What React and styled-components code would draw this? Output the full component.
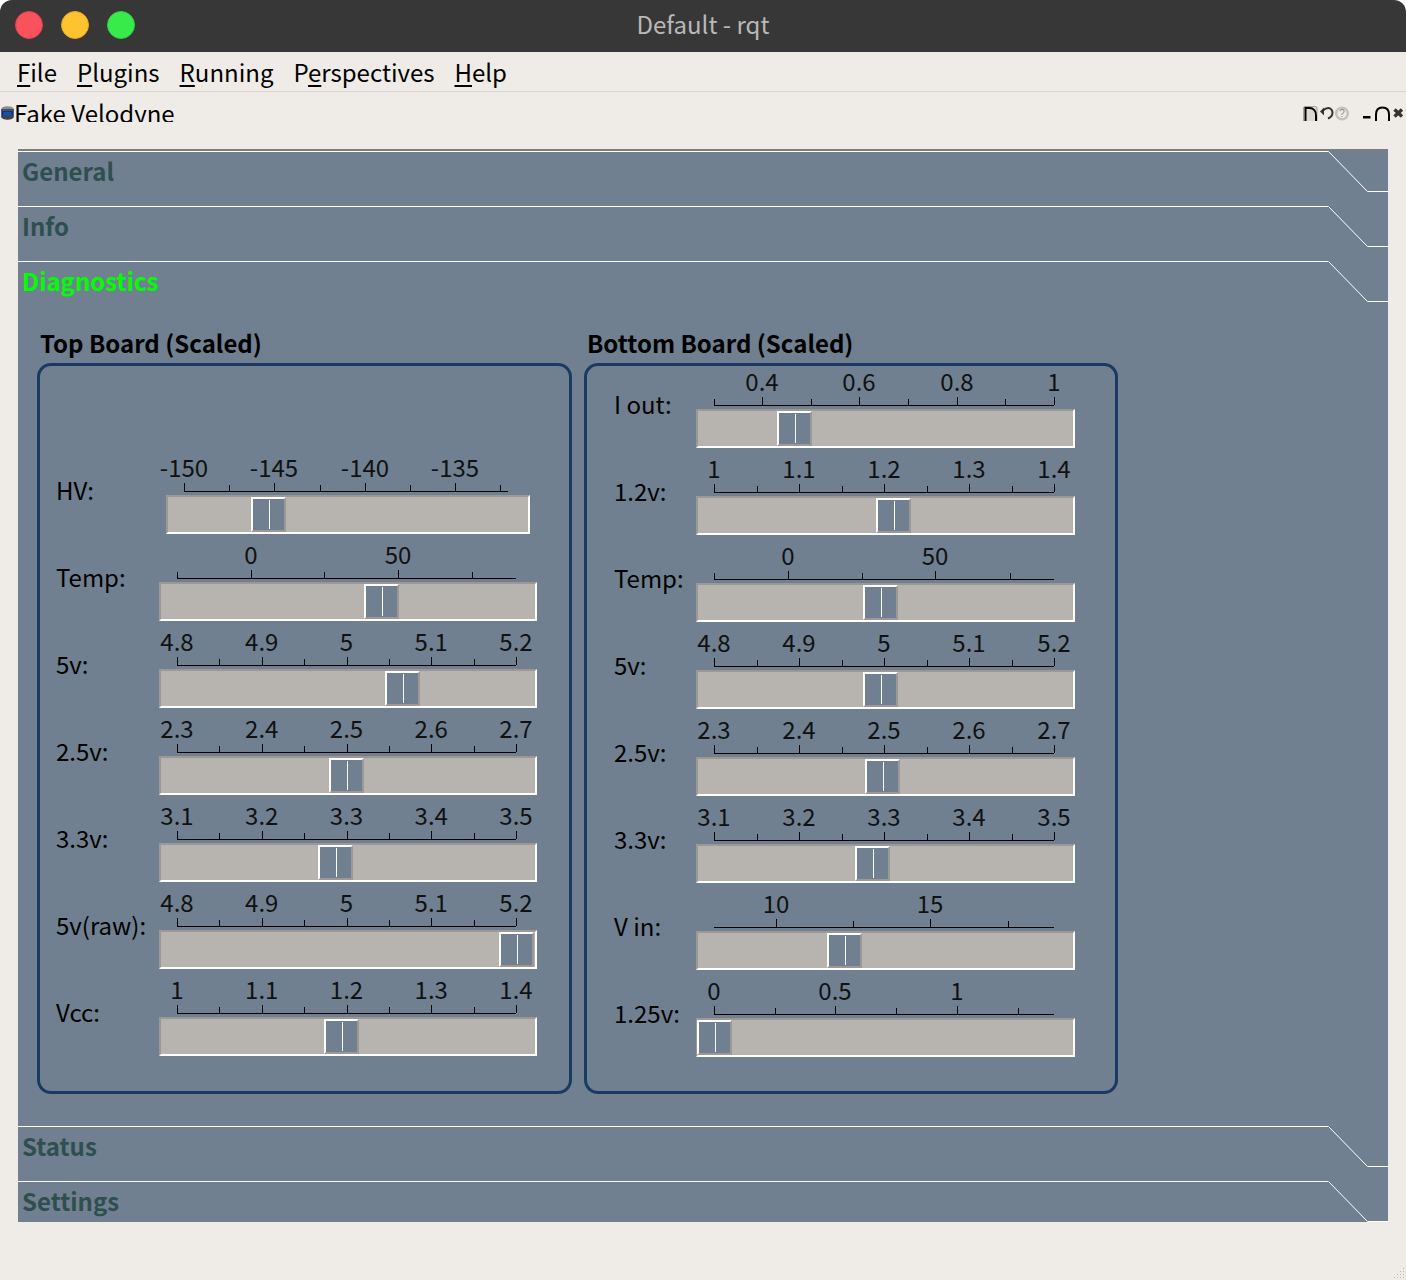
import React from "react";
import styled, { createGlobalStyle } from "styled-components";

const FONT = `"Noto Sans CJK JP", "Noto Sans", sans-serif`;

const Global = createGlobalStyle`
  html, body { margin: 0; padding: 0; background: #ffffff; }
  * { box-sizing: border-box; }
`;

const Window = styled.div`
  position: relative;
  width: 1406px;
  height: 1280px;
  background: #efece7;
  border-radius: 12px 12px 0 0;
  overflow: hidden;
  font-family: ${FONT};
  color: #000;
`;
const TitleBar = styled.header`
  position: relative;
  height: 52px;
  background: #373737;
  display: flex;
  align-items: center;
  justify-content: center;
`;
const Lights = styled.div`
  position: absolute;
  left: 15px;
  top: 11px;
  display: flex;
  gap: 18px;
`;
const Light = styled.span`
  width: 28px;
  height: 28px;
  border-radius: 50%;
  background: ${(p) => p.$c};
  border: 1px solid ${(p) => p.$b};
`;
const Title = styled.div`
  color: #b9b9b9;
  font-size: 24px;
  line-height: 48px;
  height: 52px;
`;
const MenuBar = styled.nav`
  height: 40px;
  border-bottom: 1px solid #d9d5d0;
  display: flex;
  align-items: center;
  gap: 20px;
  padding-left: 17px;
`;
const MenuItem = styled.span`
  font-size: 24px;
  line-height: 40px;
  u { text-decoration-thickness: 2px; text-underline-offset: 3px; }
`;
const DockTitle = styled.div`
  height: 30px;
  display: flex;
  align-items: flex-start;
  overflow: hidden;
`;
const DockName = styled.span`
  font-size: 24px;
  line-height: 42px;
`;
const DockIcons = styled.div`
  margin-left: auto;
  display: flex;
  align-items: flex-start;
  padding-top: 14px;
`;
const Main = styled.main`
  padding: 27px 18px 0;
`;
const ToolBox = styled.div`
  height: 1073px;
  background: #708090;
  border-top: 2px solid #7d7d7d;
  display: flex;
  flex-direction: column;
  overflow: hidden;
`;
const TabHead = styled.div`
  position: relative;
  height: ${(p) => (p.$last ? "41px" : "55px")};
  flex: none;
  padding-left: 4px;
  font-size: 24px;
  font-weight: 700;
  line-height: 39px;
  color: ${(p) => (p.$active ? "#00ff00" : "#2f4f4f")};
`;
const TabEdge = styled.svg`
  position: absolute;
  left: 0;
  top: 0;
`;
const Panels = styled.div`
  flex: 1;
  display: flex;
  gap: 12px;
  padding-left: 19px;
`;
const Group = styled.section`
  width: ${(p) => p.$w}px;
`;
const GroupTitle = styled.h3`
  margin: 0;
  height: 47px;
  padding-left: ${(p) => p.$pl}px;
  font-size: 24px;
  line-height: 54px;
  font-weight: 700;
`;
const Frame = styled.div`
  height: 731px;
  border: 3px solid #1b3a63;
  border-radius: 14px;
  display: flex;
  flex-direction: column;
  justify-content: flex-end;
  padding: 0 0 ${(p) => p.$pb}px ${(p) => p.$pl}px;
  gap: 9px;
`;
const Row = styled.div`
  display: grid;
  grid-template-columns: ${(p) => p.$label}px ${(p) => p.$slot}px;
  height: 78px;
`;
const Label = styled.div`
  font-size: 24px;
  line-height: 68px;
`;
const Scale = styled.svg`
  display: block;
  overflow: visible;
  text {
    font-family: ${FONT};
    font-size: 24px;
    fill: #111;
    text-anchor: middle;
  }
`;
const Groove = styled.div`
  position: relative;
  height: 39px;
  margin: 0 ${(p) => p.$inset}px;
  background: #b7b3af;
  border-style: solid;
  border-width: 2px;
  border-color: #9b9895 #fff #fff #9b9895;
`;
const Handle = styled.div`
  position: absolute;
  top: 0;
  bottom: 0;
  width: 35px;
  background: #708090;
  border-style: solid;
  border-width: 2px;
  border-color: #fff #9b9895 #9b9895 #fff;
  &::after {
    content: "";
    position: absolute;
    left: 16px;
    top: 1px;
    bottom: 1px;
    width: 1px;
    background: #fff;
  }
`;

const Grip = styled.svg`
  position: absolute;
  right: 0;
  bottom: 0;
`;

const even = (a, b, n, labels) =>
  Array.from({ length: n }, (_, i) => ({
    x: a + ((b - a) * i) / (n - 1),
    t: labels[i],
  }));

const five = (labels) =>
  even(0, 1, 9, labels.flatMap((l) => [l, null]).slice(0, 9));

const spread = (a, b, labels) =>
  five(labels).map((m) => ({ x: a + (b - a) * m.x, t: m.t }));

const L0 = 159;
const R0 = 696;

const left = [
  { name: "HV:", inset: 7, axis: [184, 508], handle: 251,
    ticks: [[184,"-150"],[229],[274,"-145"],[320],[365,"-140"],[410],[455,"-135"],[500]] },
  { name: "Temp:", inset: 0, axis: [177, 516], handle: 364,
    ticks: [[177],[251,"0"],[324],[398,"50"],[472]] },
  { name: "5v:", inset: 0, axis: [177, 516], handle: 385, five: ["4.8","4.9","5","5.1","5.2"] },
  { name: "2.5v:", inset: 0, axis: [177, 516], handle: 329, five: ["2.3","2.4","2.5","2.6","2.7"] },
  { name: "3.3v:", inset: 0, axis: [177, 516], handle: 318, five: ["3.1","3.2","3.3","3.4","3.5"] },
  { name: "5v(raw):", inset: 0, axis: [177, 516], handle: 499, five: ["4.8","4.9","5","5.1","5.2"] },
  { name: "Vcc:", inset: 0, axis: [177, 516], handle: 324, five: ["1","1.1","1.2","1.3","1.4"] },
];
const right = [
  { name: "I out:", inset: 0, axis: [714, 1054], handle: 777,
    ticks: [[714],[762,"0.4"],[811],[859,"0.6"],[908],[957,"0.8"],[1005],[1054,"1"]] },
  { name: "1.2v:", inset: 0, axis: [714, 1054], handle: 876, five: ["1","1.1","1.2","1.3","1.4"] },
  { name: "Temp:", inset: 0, axis: [714, 1054], handle: 863,
    ticks: [[714],[788,"0"],[862],[935,"50"],[1010]] },
  { name: "5v:", inset: 0, axis: [714, 1054], handle: 863, five: ["4.8","4.9","5","5.1","5.2"] },
  { name: "2.5v:", inset: 0, axis: [714, 1054], handle: 865, five: ["2.3","2.4","2.5","2.6","2.7"] },
  { name: "3.3v:", inset: 0, axis: [714, 1054], handle: 855, five: ["3.1","3.2","3.3","3.4","3.5"] },
  { name: "V in:", inset: 0, axis: [714, 1054], handle: 827,
    ticks: [[776,"10"],[853],[930,"15"],[1008]] },
  { name: "1.25v:", inset: 0, axis: [714, 1054], handle: 697,
    ticks: [[714,"0"],[775],[835,"0.5"],[896],[957,"1"],[1018]] },
];

function ticksOf(d) {
  if (d.ticks) return d.ticks.map(([x, t]) => ({ x, t }));
  return spread(d.axis[0], d.axis[1], d.five);
}

function SliderRow({ d, origin, labelW, slot }) {
  const ticks = ticksOf(d);
  return (
    <Row $label={labelW} $slot={slot}>
      <Label>{d.name}</Label>
      <div>
        <Scale width={slot} height={39} viewBox={`0 0 ${slot} 39`}>
          <g shapeRendering="crispEdges" stroke="#000" strokeWidth="1">
            <line x1={d.axis[0] - origin} x2={d.axis[1] - origin} y1="35.5" y2="35.5" />
            {ticks.map((m, i) => (
              <line
                key={i}
                x1={Math.round(m.x) - origin + 0.5}
                x2={Math.round(m.x) - origin + 0.5}
                y1={m.t ? 27 : 29}
                y2="35"
              />
            ))}
          </g>
          {ticks.filter((m) => m.t).map((m, i) => (
            <text key={i} x={m.x - origin} y="21">{m.t}</text>
          ))}
        </Scale>
        <Groove $inset={d.inset}>
          <Handle style={{ left: d.handle - origin - d.inset - 2 }} />
        </Groove>
      </div>
    </Row>
  );
}

const Edge = ({ h = 41 }) => (
  <TabEdge width="1370" height={h} viewBox={`0 0 1370 ${h}`} fill="none">
    <path d="M0 0.5H1310.5L1349.5 40.5H1370" stroke="#fff" strokeWidth="1" />
  </TabEdge>
);

const Tab = ({ children, active, last }) => (
  <TabHead $active={active} $last={last}>
    <Edge />
    {children}
  </TabHead>
);

const LidarIcon = () => (
  <svg width="13" height="14" viewBox="0 0 13 14" style={{ marginTop: 14, marginLeft: 1, flex: "none" }}>
    <ellipse cx="6.5" cy="3.2" rx="6.2" ry="3" fill="#8a8d92" />
    <rect x="0.3" y="3.2" width="12.4" height="8" fill="#0b2f78" />
    <rect x="0.3" y="3.2" width="12.4" height="2" fill="#4d535e" />
    <ellipse cx="6.5" cy="11" rx="6.2" ry="2.8" fill="#3f4450" />
    <rect x="2.5" y="6" width="8" height="3" fill="#1250c0" />
  </svg>
);

const ToolIcons = () => (
  <DockIcons>
    <svg width="103" height="15" viewBox="0 0 103 15">
      <rect x="0.5" y="0.5" width="13.5" height="16" rx="1.5" fill="#dcd9d5" stroke="#a5a29e" />
      <path d="M2.5 17V2H6.5C10.5 2 13 5 13 9.5V17" fill="none" stroke="#000" strokeWidth="2" />
      <path d="M17 5.5L21 1.5V9.5Z" fill="#333" />
      <path d="M20 4.5C22 2.5 24 2 25.5 2C27.5 2 29.5 4 29.5 6.5C29.5 9.5 27.5 11.5 25 12.5" fill="none" stroke="#333" strokeWidth="2" />
      <circle cx="39" cy="7.5" r="7" fill="#c4c2bf" />
      <circle cx="39" cy="7.5" r="4.5" fill="#ecebe9" />
      <text x="39" y="11" fontSize="10" textAnchor="middle" fill="#888" fontFamily="Liberation Sans">?</text>
      <rect x="60" y="10" width="7.5" height="2.5" fill="#000" />
      <path d="M73 17V8.5C73 3.5 75.5 1.5 79.5 1.5C83.5 1.5 86 3.5 86 8.5V17" fill="none" stroke="#000" strokeWidth="2" />
      <path d="M91.5 3.5L99 10.5M99 3.5L91.5 10.5" stroke="#333" strokeWidth="3.4" />
    </svg>
  </DockIcons>
);

export default function App() {
  return (
    <>
      <Global />
      <Window>
        <TitleBar>
          <Lights>
            <Light $c="#f9525c" $b="#e0404a" />
            <Light $c="#fec42f" $b="#e6a820" />
            <Light $c="#38ea4a" $b="#2fd040" />
          </Lights>
          <Title>Default - rqt</Title>
        </TitleBar>
        <MenuBar>
          <MenuItem><u>F</u>ile</MenuItem>
          <MenuItem><u>P</u>lugins</MenuItem>
          <MenuItem><u>R</u>unning</MenuItem>
          <MenuItem>P<u>e</u>rspectives</MenuItem>
          <MenuItem><u>H</u>elp</MenuItem>
        </MenuBar>
        <DockTitle>
          <LidarIcon />
          <DockName>Fake Velodyne</DockName>
          <ToolIcons />
        </DockTitle>
        <Main>
          <ToolBox>
            <Tab>General</Tab>
            <Tab>Info</Tab>
            <Tab active>Diagnostics</Tab>
            <Panels>
              <Group $w={535}>
                <GroupTitle $pl={3}>Top Board (Scaled)</GroupTitle>
                <Frame $pl={16} $pb={35}>
                  {left.map((d) => (
                    <SliderRow key={d.name} d={d} origin={L0} labelW={103} slot={378} />
                  ))}
                </Frame>
              </Group>
              <Group $w={534}>
                <GroupTitle $pl={3}>Bottom Board (Scaled)</GroupTitle>
                <Frame $pl={27} $pb={34}>
                  {right.map((d) => (
                    <SliderRow key={d.name} d={d} origin={R0} labelW={82} slot={379} />
                  ))}
                </Frame>
              </Group>
            </Panels>
            <Tab>Status</Tab>
            <Tab last>Settings</Tab>
          </ToolBox>
        </Main>
        <Grip width="14" height="14" viewBox="0 0 14 14" fill="#bdb9b4">
          {[[11,2],[8,5],[11,5],[5,8],[8,8],[11,8],[2,11],[5,11],[8,11],[11,11]].map(([x, y]) => (
            <rect key={`${x}-${y}`} x={x} y={y} width="1" height="1" />
          ))}
        </Grip>
      </Window>
    </>
  );
}
